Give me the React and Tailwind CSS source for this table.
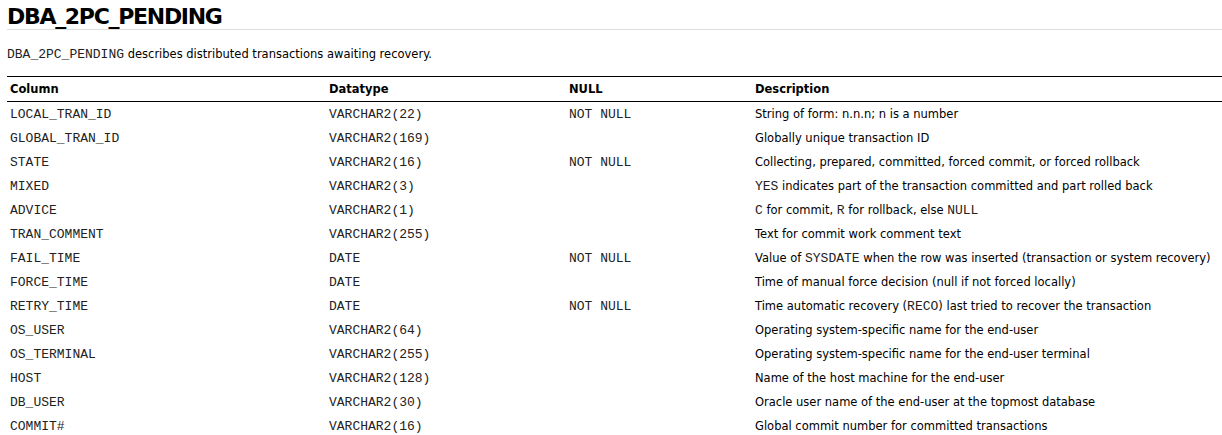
const rows = [
  ["LOCAL_TRAN_ID", "VARCHAR2(22)", "NOT NULL", ["String of form: n.n.n; n is a number"]],
  ["GLOBAL_TRAN_ID", "VARCHAR2(169)", "", ["Globally unique transaction ID"]],
  ["STATE", "VARCHAR2(16)", "NOT NULL", ["Collecting, prepared, committed, forced commit, or forced rollback"]],
  ["MIXED", "VARCHAR2(3)", "", [{ c: "YES" }, " indicates part of the transaction committed and part rolled back"]],
  ["ADVICE", "VARCHAR2(1)", "", [{ c: "C" }, " for commit, ", { c: "R" }, " for rollback, else ", { c: "NULL" }]],
  ["TRAN_COMMENT", "VARCHAR2(255)", "", ["Text for commit work comment text"]],
  ["FAIL_TIME", "DATE", "NOT NULL", ["Value of ", { c: "SYSDATE" }, " when the row was inserted (transaction or system recovery)"]],
  ["FORCE_TIME", "DATE", "", ["Time of manual force decision (null if not forced locally)"]],
  ["RETRY_TIME", "DATE", "NOT NULL", ["Time automatic recovery (", { c: "RECO" }, ") last tried to recover the transaction"]],
  ["OS_USER", "VARCHAR2(64)", "", ["Operating system-specific name for the end-user"]],
  ["OS_TERMINAL", "VARCHAR2(255)", "", ["Operating system-specific name for the end-user terminal"]],
  ["HOST", "VARCHAR2(128)", "", ["Name of the host machine for the end-user"]],
  ["DB_USER", "VARCHAR2(30)", "", ["Oracle user name of the end-user at the topmost database"]],
  ["COMMIT#", "VARCHAR2(16)", "", ["Global commit number for committed transactions"]],
];

const mono =
  "font-['Courier_New','Nimbus_Mono_PS','FreeMono','Liberation_Mono',monospace] text-[13px] text-[#222222]";

export default function App() {
  return (
    <div className="bg-white text-black pl-[7px] font-['DejaVu_Sans',sans-serif] text-[11.5px]">
      <h1 className="h-[30px] border-b border-[#dddddd] font-bold text-[22px] leading-[33px] tracking-[-1.3px]">
        DBA_2PC_PENDING
      </h1>
      <p className="h-[46px] pt-[4px] flex items-center">
        <span className={mono}>DBA_2PC_PENDING</span>
        <span>&nbsp;describes distributed transactions awaiting recovery.</span>
      </p>
      <table className="w-[1215px] border-collapse">
        <thead>
          <tr className="h-[25px] border-t border-b border-black">
            <th className="text-left font-bold pl-[3px] pt-[2px] w-[319px]">Column</th>
            <th className="text-left font-bold pl-[3px] pt-[2px] w-[240px]">Datatype</th>
            <th className="text-left font-bold pl-[3px] pt-[2px] w-[186px]">NULL</th>
            <th className="text-left font-bold pl-[3px] pt-[2px]">Description</th>
          </tr>
        </thead>
        <tbody>
          {rows.map((r) => (
            <tr key={r[0]} className="h-[24px]">
              <td className={`${mono} pl-[3px] pt-[2px]`}>{r[0]}</td>
              <td className={`${mono} pl-[3px] pt-[2px]`}>{r[1]}</td>
              <td className={`${mono} pl-[3px] pt-[2px]`}>{r[2]}</td>
              <td className="pl-[3px] pt-[2px]">
                {r[3].map((p, i) =>
                  typeof p === "string" ? (
                    <span key={i}>{p}</span>
                  ) : (
                    <span key={i} className={mono}>{p.c}</span>
                  )
                )}
              </td>
            </tr>
          ))}
        </tbody>
      </table>
    </div>
  );
}
